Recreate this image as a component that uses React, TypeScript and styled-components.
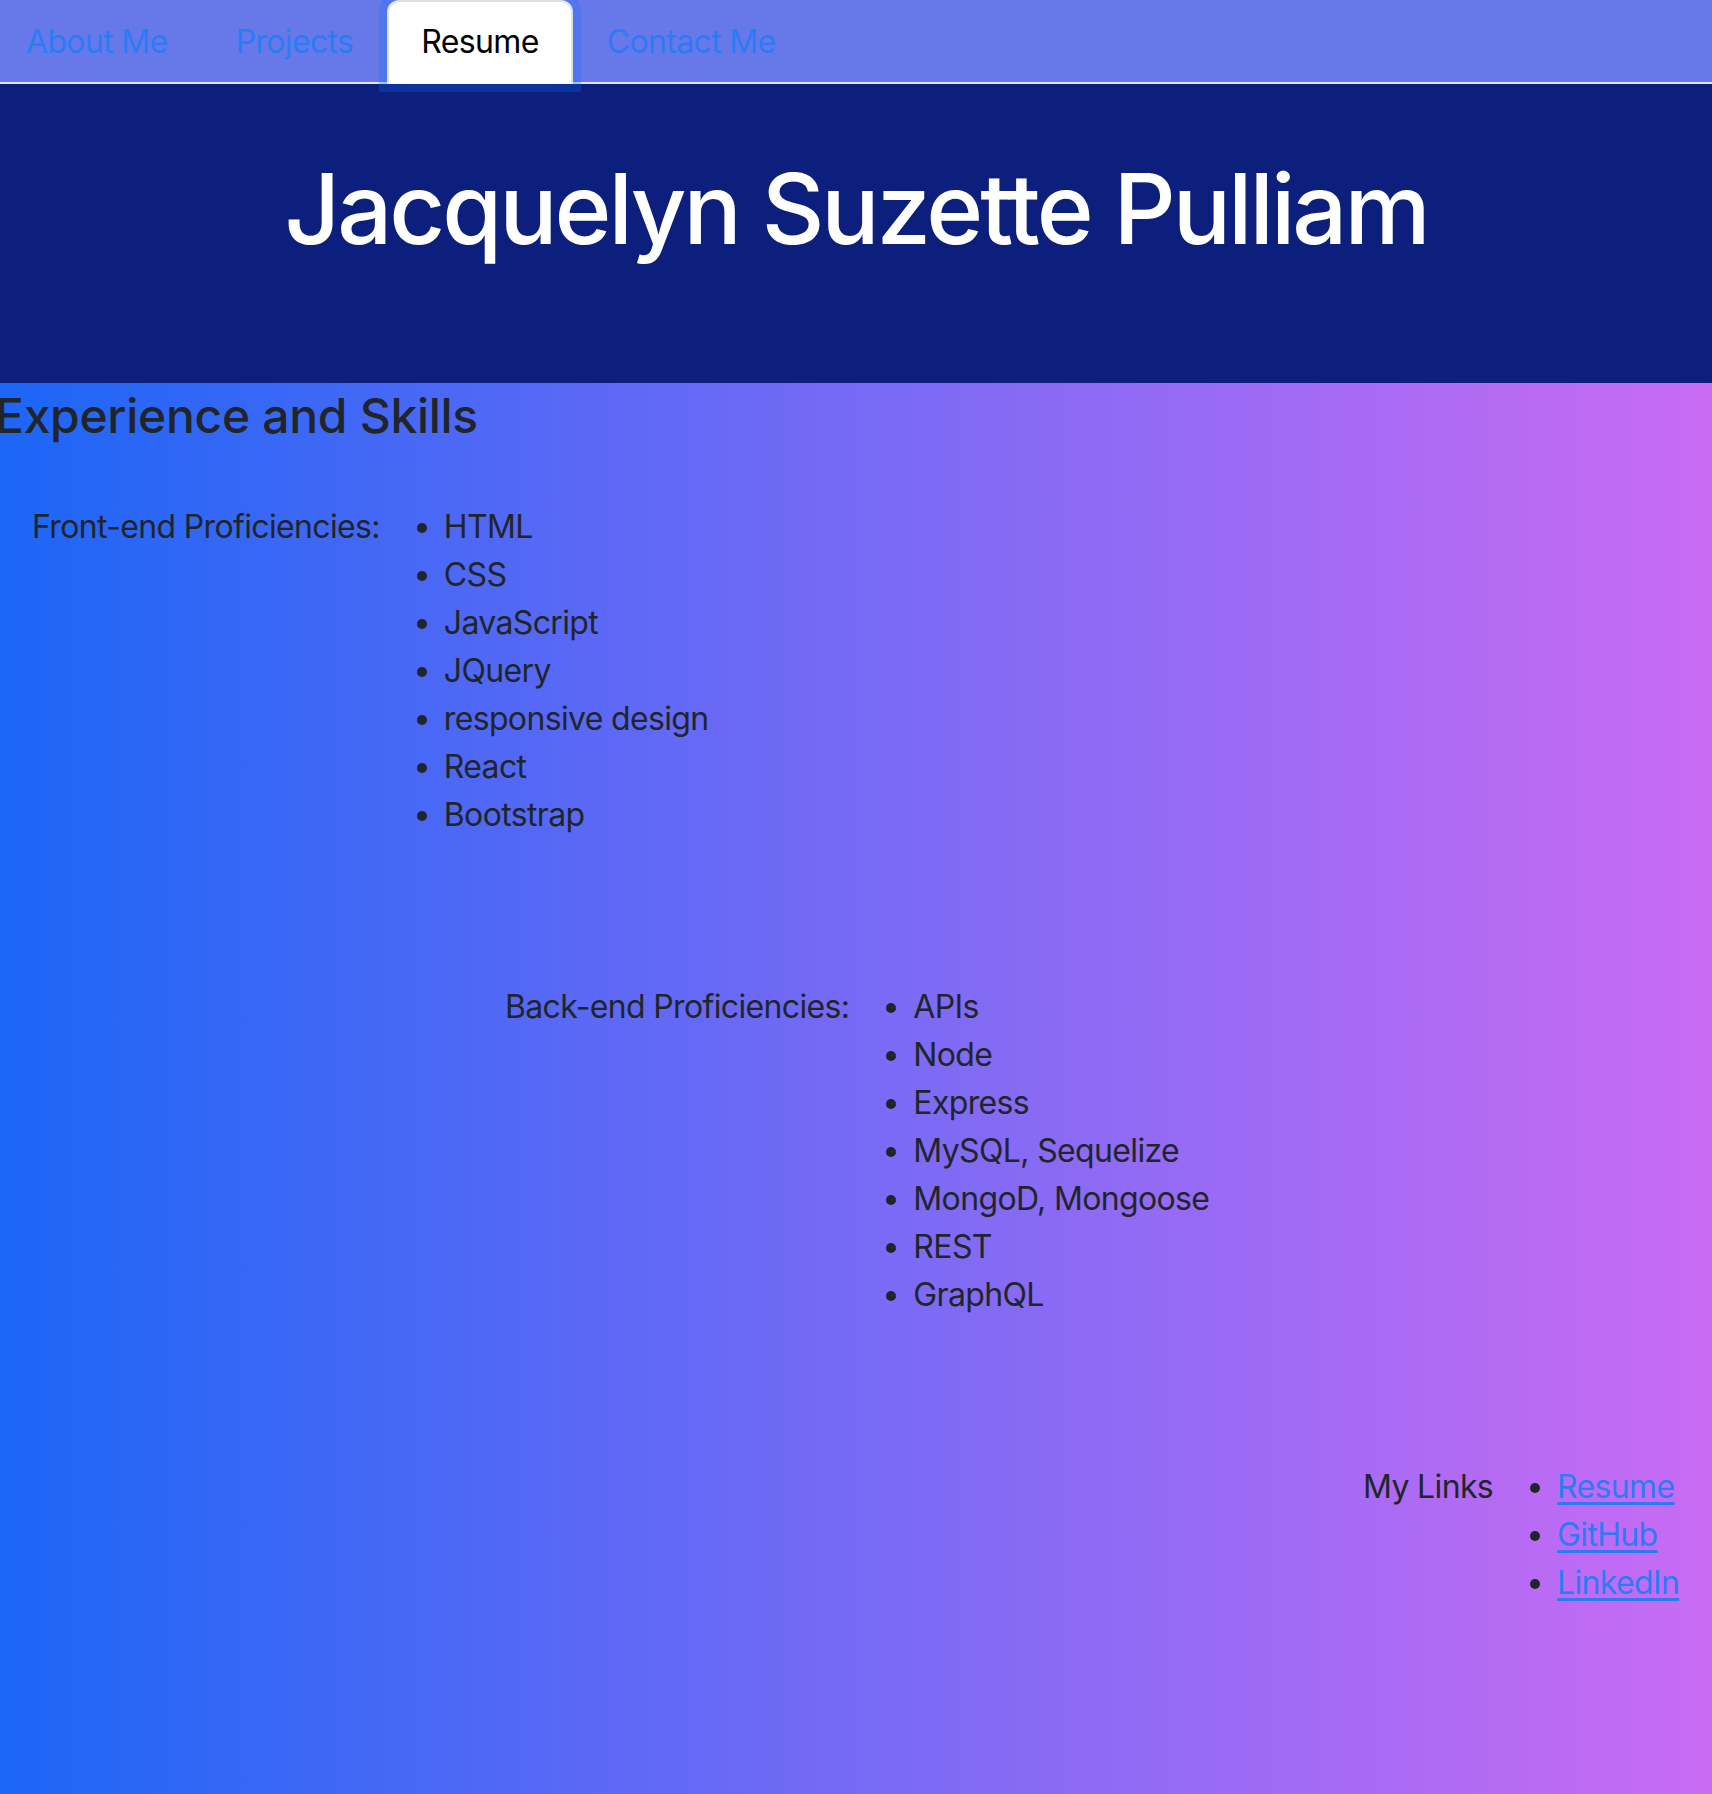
import React from "react";
import styled, { createGlobalStyle, css } from "styled-components";

const GlobalStyle = createGlobalStyle`
  html, body {
    margin: 0;
    padding: 0;
  }
  body {
    font-family: Inter, "Noto Sans", "Liberation Sans", sans-serif;
    color: #212529;
    overflow: hidden;
  }
  * { box-sizing: border-box; }
`;

const Page = styled.div`
  min-height: 100vh;
  display: flex;
  flex-direction: column;
`;

const TabBar = styled.nav`
  background: #6779e9;
  border-bottom: 2px solid #dee2e6;
  height: 84px;
`;

const TabList = styled.ul`
  display: flex;
  list-style: none;
  margin: 0 0 0 -8px;
  padding: 0;
`;

const Tab = styled.li<{ $active?: boolean }>`
  position: relative;
  padding: 16px 32px;
  font-size: 32px;
  line-height: 48px;
  letter-spacing: -0.65px;
  border: 2px solid transparent;
  border-radius: 12px 12px 0 0;
  color: #2b7cf4;
  height: 84px;
  white-space: nowrap;
  ${(p) =>
    p.$active &&
    css`
      z-index: 2;
      background: #fff;
      color: #000;
      border-color: #dee2e6 #dee2e6 #fff;
      box-shadow: 0 0 0 8px rgba(13, 110, 253, 0.25);
    `}
`;

const Hero = styled.header`
  background: #0c1f7d;
  height: 299px;
  padding-top: 67px;
  display: flex;
  justify-content: center;
`;

const Title = styled.h1`
  margin: 0;
  color: #fff;
  font-size: 97px;
  line-height: 1.2;
  font-weight: 500;
  letter-spacing: -3px;
`;

const Content = styled.main`
  flex: 1;
  background: linear-gradient(90deg, #1c66f6 0%, #7a6af5 52%, #c96bf3 100%);
  padding-bottom: 180px;
`;

const Heading = styled.h2`
  margin: 4px 0 0 -5px;
  font-size: 48px;
  line-height: 1.2;
  font-weight: 500;
  letter-spacing: -0.3px;
  color: #212529;
`;

const Blocks = styled.div`
  display: flex;
  flex-direction: column;
  gap: 144px;
  margin-top: 58px;
`;

const Block = styled.section<{ $indent: number }>`
  display: flex;
  align-items: flex-start;
  margin-left: ${(p) => p.$indent}px;
  font-size: 32px;
  line-height: 48px;
  letter-spacing: -0.65px;
`;

const Label = styled.div`
  white-space: nowrap;
`;

const Items = styled.ul`
  margin: 0;
  padding-left: 64px;
`;

const Item = styled.li`
  white-space: nowrap;
`;

const Link = styled.a`
  color: #2b7cf4;
  text-decoration: underline;
  text-underline-offset: 4px;
  text-decoration-thickness: 3px;
`;

const frontEnd = ["HTML", "CSS", "JavaScript", "JQuery", "responsive design", "React", "Bootstrap"];
const backEnd = ["APIs", "Node", "Express", "MySQL, Sequelize", "MongoD, Mongoose", "REST", "GraphQL"];
const links = ["Resume", "GitHub", "LinkedIn"];
const tabs = ["About Me", "Projects", "Resume", "Contact Me"];

export default function App() {
  return (
    <Page>
      <GlobalStyle />
      <TabBar>
        <TabList>
          {tabs.map((t) => (
            <Tab key={t} $active={t === "Resume"}>
              {t}
            </Tab>
          ))}
        </TabList>
      </TabBar>
      <Hero>
        <Title>Jacquelyn Suzette Pulliam</Title>
      </Hero>
      <Content>
        <Heading>Experience and Skills</Heading>
        <Blocks>
          <Block $indent={32}>
            <Label>Front-end Proficiencies:</Label>
            <Items>
              {frontEnd.map((s) => (
                <Item key={s}>{s}</Item>
              ))}
            </Items>
          </Block>
          <Block $indent={505}>
            <Label>Back-end Proficiencies:</Label>
            <Items>
              {backEnd.map((s) => (
                <Item key={s}>{s}</Item>
              ))}
            </Items>
          </Block>
          <Block $indent={1363}>
            <Label>My Links</Label>
            <Items>
              {links.map((s) => (
                <Item key={s}>
                  <Link href="#">{s}</Link>
                </Item>
              ))}
            </Items>
          </Block>
        </Blocks>
      </Content>
    </Page>
  );
}
